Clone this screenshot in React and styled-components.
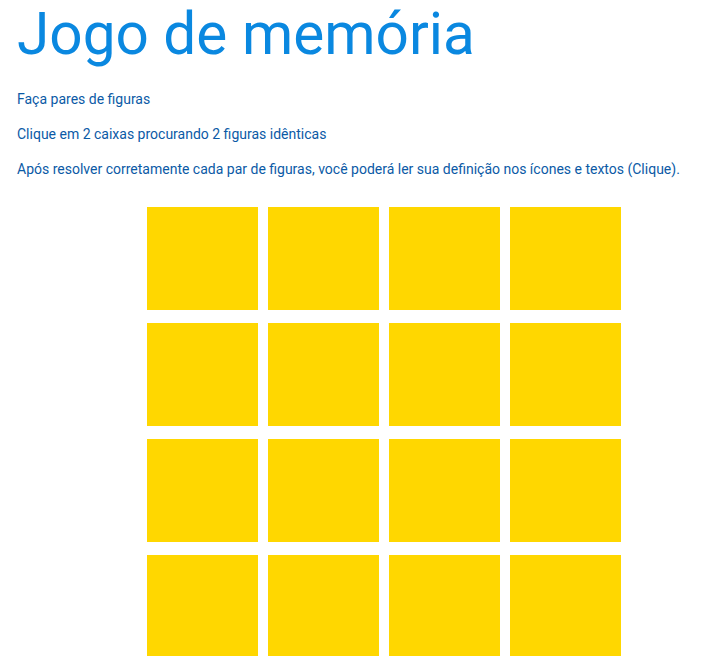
import React from "react";
import styled, { createGlobalStyle } from "styled-components";

const GlobalStyle = createGlobalStyle`
  html, body {
    margin: 0;
    padding: 0;
    background: #ffffff;
    font-family: Roboto, "Liberation Sans", sans-serif;
  }
`;

const Page = styled.div`
  padding: 0 17px;
`;

const Title = styled.h1`
  margin: 0;
  padding-top: 1px;
  font-size: 58.5px;
  font-weight: 400;
  line-height: 66px;
  color: #0a88e0;
`;

const Intro = styled.div`
  margin-top: 24px;
  display: flex;
  flex-direction: column;
  gap: 18px;
`;

const Line = styled.p`
  margin: 0;
  font-size: 14px;
  line-height: 17px;
  color: #0b5aa6;
`;

const Board = styled.div`
  margin: 29px 0 0 130px;
  display: grid;
  grid-template-columns: repeat(4, 111px);
  grid-auto-rows: 103px;
  column-gap: 10px;
  row-gap: 13px;
`;

const Card = styled.div`
  background: #ffd700;
  cursor: pointer;
`;

const cards = Array.from({ length: 16 }, (_, i) => i);

export default function App() {
  return (
    <>
      <GlobalStyle />
      <Page>
        <Title>Jogo de memória</Title>
        <Intro>
          <Line>Faça pares de figuras</Line>
          <Line>Clique em 2 caixas procurando 2 figuras idênticas</Line>
          <Line>
            Após resolver corretamente cada par de figuras, você poderá ler sua
            definição nos ícones e textos (Clique).
          </Line>
        </Intro>
        <Board>
          {cards.map((c) => (
            <Card key={c} />
          ))}
        </Board>
      </Page>
    </>
  );
}
